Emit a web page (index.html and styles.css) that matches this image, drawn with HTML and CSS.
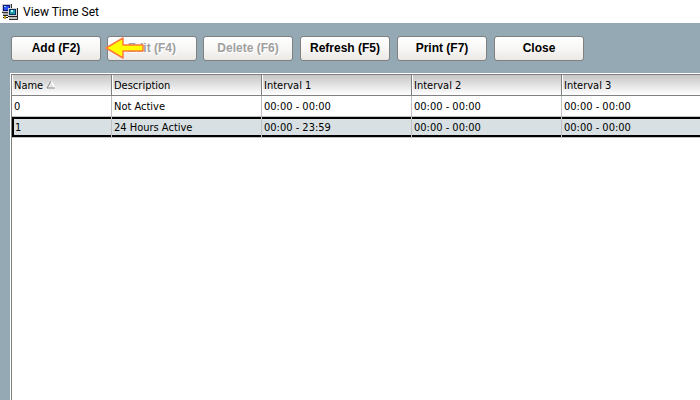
FILE: index.html
```html
<!DOCTYPE html>
<html lang="en">
<head>
<meta charset="utf-8">
<title>View Time Set</title>
<link rel="stylesheet" href="styles.css">
</head>
<body>
<header class="titlebar">
  <svg class="app-icon" viewBox="0 0 16 16" shape-rendering="crispEdges" aria-hidden="true">
    <path fill="#333" d="M0 0h10v9H0z"/>
    <path fill="#c8c8c8" d="M0 0h9v8H0z"/>
    <path fill="#10107c" d="M1 1h7v6H1z"/>
    <path fill="#2a50f0" d="M2 2h5v4H2z"/>
    <path fill="#8fe8ff" d="M2 2h2v1H2z"/>
    <path fill="#a8a8a8" d="M1 9h6v2H1z"/>
    <path fill="#222" d="M1 11h6v1H1z"/>
    <path fill="#222" d="M6 4h10v9H6z"/>
    <path fill="#d4d4d4" d="M6 4h9v8H6z"/>
    <path fill="#06305c" d="M7 5h7v6H7z"/>
    <path fill="#1c9ca8" d="M8 6h5v4H8z"/>
    <path fill="#b8ffff" d="M9 6h2v2H9z"/>
    <path fill="#c0c0c0" d="M7 13h8v2H7z"/>
    <path fill="#333" d="M7 15h9v1H7zM15 13h1v2h-1z"/>
    <path fill="#222" d="M1 13h5v1H1z"/>
    <path fill="#c99a20" d="M2 12h2v3H2z"/>
  </svg>
  <h1 class="title">View Time Set</h1>
</header>
<main class="window">
  <div class="toolbar">
    <div class="group edit-group">
      <button class="btn" type="button">Add (F2)</button>
      <div class="pointed">
        <button class="btn" type="button" disabled>Edit (F4)</button>
        <svg class="pointer" viewBox="0 0 42 24" aria-hidden="true">
          <path d="M3 12 20 2v7h20v6H20v7z" fill="#ffff00" stroke="#ff7a3c" stroke-width="1.5" stroke-linejoin="round"/>
        </svg>
      </div>
      <button class="btn" type="button" disabled>Delete (F6)</button>
    </div>
    <div class="group">
      <button class="btn" type="button">Refresh (F5)</button>
      <button class="btn" type="button">Print (F7)</button>
      <button class="btn" type="button">Close</button>
    </div>
  </div>
  <div class="grid-frame">
    <table class="grid">
      <colgroup><col class="col-name"><col class="col-text"><col class="col-text"><col class="col-text"><col></colgroup>
      <thead>
        <tr>
          <th scope="col">Name <svg class="sort" viewBox="0 0 10 9" aria-hidden="true"><path d="M5 1 9 8" fill="none" stroke="#fff" stroke-width="1.5"/><path d="M1 8 5 1M1 8h8" fill="none" stroke="#8a8a8a"/></svg></th>
          <th scope="col">Description</th>
          <th scope="col">Interval 1</th>
          <th scope="col">Interval 2</th>
          <th scope="col">Interval 3</th>
        </tr>
      </thead>
      <tbody>
        <tr><td>0</td><td>Not Active</td><td>00:00 - 00:00</td><td>00:00 - 00:00</td><td>00:00 - 00:00</td></tr>
        <tr class="selected"><td>1</td><td>24 Hours Active</td><td>00:00 - 23:59</td><td>00:00 - 00:00</td><td>00:00 - 00:00</td></tr>
      </tbody>
    </table>
  </div>
</main>
</body>
</html>
```
FILE: styles.css
```css
* { box-sizing: border-box; }

body {
  margin: 0;
  min-height: 100vh;
  display: flex;
  flex-direction: column;
  background: #94a9b4;
  color: #000;
  font: 11px/14px "DejaVu Sans Condensed", Tahoma, sans-serif;
}

.titlebar {
  display: flex;
  align-items: center;
  gap: 5px;
  height: 23px;
  padding: 0 2px;
  background: #fff;
}

.app-icon { width: 16px; height: 16px; }

.title {
  margin: 0;
  font: 12px/16px Roboto, "Segoe UI", sans-serif;
}

.window {
  flex: 1;
  display: flex;
  flex-direction: column;
  gap: 12px;
  padding: 13px 0 0 10px;
}

.toolbar {
  display: flex;
  gap: 7px;
  padding-left: 1px;
}

.group { display: flex; gap: 7px; }
.edit-group { gap: 6px; }

.btn {
  display: block;
  width: 90px;
  height: 25px;
  padding: 0;
  border: 1px solid #808080;
  border-radius: 3px;
  background: linear-gradient(#fff, #f8f7f6 50%, #ebe8e5);
  color: #000;
  font: bold 12px/15px "Liberation Sans", Arial, sans-serif;
}

.btn:disabled {
  color: #a0a0a0;
  text-shadow: 1px 1px #fff;
}

.pointed { position: relative; }

.pointer {
  position: absolute;
  left: -4px;
  top: 0;
  width: 42px;
  height: 24px;
}

.grid-frame {
  flex: 1;
  border-top: 1px solid #fff;
  border-left: 1px solid #fff;
  background: #fff;
  box-shadow: inset 1px 1px #808080;
  padding: 1px 0 0 1px;
}

.grid {
  width: 100%;
  table-layout: fixed;
  border-collapse: separate;
  border-spacing: 0;
}

.col-name { width: 100px; }
.col-text { width: 150px; }

.grid th,
.grid td {
  height: 21px;
  padding: 2px 2px 0;
  text-align: left;
  font-weight: normal;
  white-space: nowrap;
  border-right: 1px solid #c0c0c0;
  border-bottom: 1px solid #c0c0c0;
}

.grid th {
  border-color: #808080;
  background: linear-gradient(#c6c6c6, #fff);
  box-shadow: inset 1px 0 #fff;
}

.grid th:last-child,
.grid td:last-child { border-right: 0; }

.sort { width: 10px; height: 9px; }

.grid .selected td {
  background: #d8e0e3;
  box-shadow: inset 0 2px #000, inset 0 -2px #000;
}

.grid .selected td:first-child {
  padding-left: 3px;
  box-shadow: inset 0 2px #000, inset 0 -2px #000, inset 2px 0 #000;
}
```
